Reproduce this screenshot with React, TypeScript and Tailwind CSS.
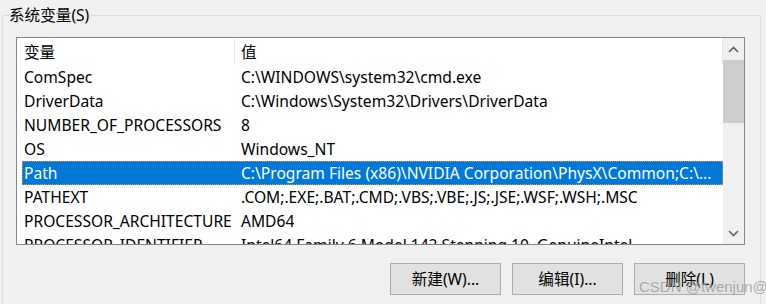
import React from "react";

type EnvVar = {
  name: string;
  value: string;
};

const vars: EnvVar[] = [
  { name: "ComSpec", value: "C:\\WINDOWS\\system32\\cmd.exe" },
  { name: "DriverData", value: "C:\\Windows\\System32\\Drivers\\DriverData" },
  { name: "NUMBER_OF_PROCESSORS", value: "8" },
  { name: "OS", value: "Windows_NT" },
  { name: "Path", value: "C:\\Program Files (x86)\\NVIDIA Corporation\\PhysX\\Common;C:\\..." },
  { name: "PATHEXT", value: ".COM;.EXE;.BAT;.CMD;.VBS;.VBE;.JS;.JSE;.WSF;.WSH;.MSC" },
  { name: "PROCESSOR_ARCHITECTURE", value: "AMD64" },
  { name: "PROCESSOR_IDENTIFIER", value: "Intel64 Family 6 Model 142 Stepping 10, GenuineIntel" },
];

function Chevron({ up }: { up?: boolean }) {
  return (
    <svg width="11" height="7" viewBox="0 0 11 7" className="block">
      <path
        d={up ? "M1 6 L5.5 1.5 L10 6" : "M1 1 L5.5 5.5 L10 1"}
        fill="none"
        stroke="#606060"
        strokeWidth="1.6"
      />
    </svg>
  );
}

function Row({ item, selected }: { item: EnvVar; selected?: boolean }) {
  return (
    <div
      className={
        selected
          ? "flex h-[24px] items-center ml-[5px] bg-[#0078d7] text-white outline-1 outline-dotted outline-[#e0904a] -outline-offset-1"
          : "flex h-[24px] items-center ml-[5px] text-black"
      }
    >
      <div className="w-[212px] shrink-0 pl-[2px] whitespace-nowrap overflow-hidden">{item.name}</div>
      <div className="pl-[7px] whitespace-nowrap overflow-hidden">{item.value}</div>
    </div>
  );
}

export default function App() {
  return (
    <div className="relative w-[766px] h-[304px] overflow-hidden bg-[#f0f0f0] text-[15.6px] leading-[22px] font-['Noto_Sans','Noto_Sans_CJK_SC',sans-serif] text-black">
      <fieldset className="mt-[4px] ml-[2px] w-[759px] h-[330px] border border-[#dcdcdc]">
        <legend className="ml-[5px] px-[1px]">系统变量(S)</legend>

        <div className="ml-[13px] mt-[11px] w-[729px] h-[208px] border border-[#828790] bg-white flex">
          <div className="flex-1 overflow-hidden">
            <div className="flex h-[27px] items-center">
              <div className="w-[217px] shrink-0 pl-[7px]">变量</div>
              <div className="w-px h-[25px] bg-[#e5e5e5]" />
              <div className="flex-1 pl-[6px]">值</div>
              <div className="w-px h-[25px] bg-[#e5e5e5]" />
            </div>
            {vars.map((v) => (
              <Row key={v.name} item={v} selected={v.name === "Path"} />
            ))}
          </div>
          <div className="w-[21px] shrink-0 bg-[#f0f0f0] flex flex-col">
            <div className="h-[22px] flex items-center justify-center">
              <Chevron up />
            </div>
            <div className="h-[63px] bg-[#cdcdcd]" />
            <div className="flex-1" />
            <div className="h-[22px] flex items-center justify-center">
              <Chevron />
            </div>
          </div>
        </div>

        <div className="mt-[18px] mr-[15px] flex justify-end gap-[11px]">
          <button className="w-[111px] h-[32px] bg-[#e1e1e1] border border-[#adadad]">新建(W)...</button>
          <button className="w-[111px] h-[32px] bg-[#e1e1e1] border border-[#adadad]">编辑(I)...</button>
          <button className="w-[111px] h-[32px] bg-[#e1e1e1] border border-[#adadad]">删除(L)</button>
        </div>
      </fieldset>

      <div className="absolute left-[639px] top-[276px] whitespace-nowrap text-[15px] font-['Liberation_Sans',sans-serif] text-[#9a9a9a]/80">
        CSDN @twenjun@
      </div>
    </div>
  );
}
